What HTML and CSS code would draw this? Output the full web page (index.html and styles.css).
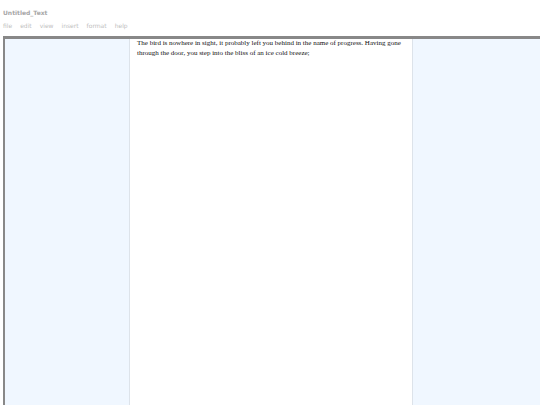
FILE: index.html
```html
<!DOCTYPE html>
<html>
<head>
<meta charset="utf-8">
<link rel="stylesheet" href="styles.css">
</head>
<body>
<div class="header">
  <div class="title">Untitled_Text</div>
  <nav class="menu">
    <span>file</span><span>edit</span><span>view</span><span>insert</span><span>format</span><span>help</span>
  </nav>
</div>
<div class="workspace">
  <div class="side side-left"></div>
  <div class="page">
    <p>The bird is nowhere in sight, it probably left you behind in the name of progress. Having gone through the door, you step into the bliss of an ice cold breeze;</p>
  </div>
  <div class="side side-right"></div>
</div>
</body>
</html>
```

FILE: styles.css
```css
html, body {
  margin: 0;
  padding: 0;
  background: #fff;
  overflow: hidden;
}
body {
  padding: 0 0 0 3px;
  font-family: "DejaVu Sans", sans-serif;
}
.header {
  padding-top: 9px;
  height: 36px;
  box-sizing: border-box;
}
.title {
  font-size: 6px;
  font-weight: bold;
  color: #a6a6a6;
  line-height: 8px;
}
.menu {
  display: flex;
  gap: 8px;
  margin-top: 5px;
  font-size: 6px;
  color: #c0c0c0;
  line-height: 8px;
}
.workspace {
  display: flex;
  border-top: 3px solid #888;
  border-left: 2px solid #888;
  height: 380px;
  width: 560px;
}
.side {
  background: #f0f7ff;
}
.side-left {
  width: 124px;
  border-right: 1px solid #dde3ea;
}
.side-right {
  flex: 1;
  border-left: 1px solid #dde3ea;
}
.page {
  width: 268px;
  padding: 0 7px;
  background: #fff;
}
.page p {
  margin: 0;
  font-family: "Liberation Serif", serif;
  font-size: 7px;
  line-height: 9.5px;
  color: #111;
}
```
